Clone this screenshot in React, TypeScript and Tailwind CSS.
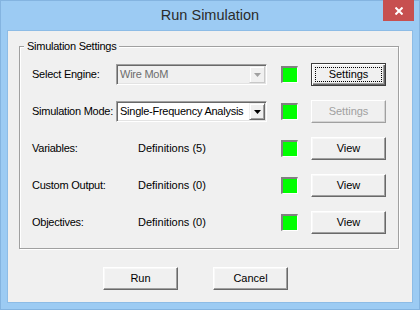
import React from "react";

type RowProps = {
  label: string;
  children: React.ReactNode;
  button: React.ReactNode;
};

function Arrow({ disabled }: { disabled?: boolean }) {
  return (
    <svg width="7" height="4" viewBox="0 0 7 4">
      <polygon points="0,0 7,0 3.5,4" fill={disabled ? "#a0a0a0" : "#000"} />
    </svg>
  );
}

function Combo({ value, disabled }: { value: string; disabled?: boolean }) {
  return (
    <div
      className={`w-[151px] h-[21px] flex items-stretch border border-t-[#a0a0a0] border-l-[#a0a0a0] border-b-white border-r-white shadow-[inset_1px_1px_0_#696969,inset_-1px_-1px_0_#e3e3e3] ${
        disabled ? "bg-[#f0f0f0]" : "bg-white"
      }`}
    >
      <span
        className={`flex-1 min-w-0 overflow-hidden whitespace-nowrap pl-[3px] flex items-center text-[11px] tracking-[-0.25px] ${
          disabled ? "text-[#6d6d6d]" : "text-black"
        }`}
      >
        {value}
      </span>
      <span
        className={`w-[16px] shrink-0 my-[1px] mr-[1px] flex items-center justify-center bg-[#f0f0f0] border ${
          disabled
            ? "border-t-[#f0f0f0] border-l-[#f0f0f0] border-b-[#c8c8c8] border-r-[#c8c8c8] shadow-[inset_1px_1px_0_#fff]"
            : "border-t-[#f0f0f0] border-l-[#f0f0f0] border-b-[#696969] border-r-[#696969] shadow-[inset_1px_1px_0_#fff,inset_-1px_-1px_0_#a0a0a0]"
        }`}
      >
        <Arrow disabled={disabled} />
      </span>
    </div>
  );
}

function Led() {
  return (
    <div className="ml-[14px] w-[17px] h-[17px] shrink-0 bg-[#00ff00] border-t-2 border-l-2 border-b border-r border-t-[#808080] border-l-[#808080] border-b-white border-r-white" />
  );
}

function Btn({
  label,
  disabled,
  isDefault,
}: {
  label: string;
  disabled?: boolean;
  isDefault?: boolean;
}) {
  if (isDefault) {
    return (
      <button className="w-[75px] h-[23px] bg-[#f0f0f0] border border-[#3c3c3c] shadow-[inset_1px_1px_0_#fff,inset_-1px_-1px_0_#696969,inset_-2px_-2px_0_#a0a0a0] p-[3px] flex">
        <span className="flex-1 flex items-center justify-center border border-dotted border-black text-[11px] text-black">
          {label}
        </span>
      </button>
    );
  }
  return (
    <button
      className={`w-[75px] h-[23px] bg-[#f0f0f0] border flex items-center justify-center text-[11px] ${
        disabled
          ? "border-t-white border-l-white border-b-[#a0a0a0] border-r-[#a0a0a0] shadow-[inset_-1px_-1px_0_#d4d4d4] text-[#a0a0a0]"
          : "border-t-white border-l-white border-b-[#696969] border-r-[#696969] shadow-[inset_-1px_-1px_0_#a0a0a0,inset_1px_1px_0_#f8f8f8] text-black"
      }`}
    >
      {label}
    </button>
  );
}

function Row({ label, children, button }: RowProps) {
  return (
    <div className="flex items-center h-[23px]">
      <span className="w-[84px] shrink-0 whitespace-nowrap text-[11px] tracking-[-0.25px] text-black">{label}</span>
      <div className="w-[151px] shrink-0 flex items-center">{children}</div>
      <Led />
      <div className="ml-[13px]">{button}</div>
    </div>
  );
}

export default function App() {
  return (
    <div className="w-[420px] h-[310px] bg-[#9ccbf3] border border-[#84b4e0] flex flex-col font-['Liberation_Sans',Arial,sans-serif] select-none">
      {/* title bar */}
      <div className="relative h-[29px] flex items-center justify-center">
        <span className="text-[14.5px] text-[#2b2b2b] pt-[1px]">Run Simulation</span>
        <div className="absolute right-[5px] top-[-1px] w-[31px] h-[21px] bg-[#c75050] flex items-center justify-center">
          <svg width="8" height="8" viewBox="0 0 8 8">
            <path d="M0.5 0.5 L7.5 7.5 M7.5 0.5 L0.5 7.5" stroke="#fff" strokeWidth="2" />
          </svg>
        </div>
      </div>

      {/* client area */}
      <div className="mx-[6px] mb-[6px] flex-1 bg-[#f0f0f0] border border-[#8dbce6]">
        <div className="relative ml-[11px] mt-[15px] w-[380px] h-[203px] border border-[#a0a0a0] shadow-[inset_1px_1px_0_#fff,1px_1px_0_#fff]">
          <span className="absolute left-[4px] top-[-8px] px-[3px] bg-[#f0f0f0] text-[11px] leading-[14px] tracking-[-0.25px] whitespace-nowrap text-black">
            Simulation Settings
          </span>
          <div className="pt-[16px] pl-[12px] flex flex-col gap-[14px]">
            <Row label="Select Engine:" button={<Btn label="Settings" isDefault />}>
              <Combo value="Wire MoM" disabled />
            </Row>
            <Row label="Simulation Mode:" button={<Btn label="Settings" disabled />}>
              <Combo value="Single-Frequency Analysis" />
            </Row>
            <Row label="Variables:" button={<Btn label="View" />}>
              <span className="pl-[22px] whitespace-nowrap text-[11px] text-black">Definitions (5)</span>
            </Row>
            <Row label="Custom Output:" button={<Btn label="View" />}>
              <span className="pl-[22px] whitespace-nowrap text-[11px] text-black">Definitions (0)</span>
            </Row>
            <Row label="Objectives:" button={<Btn label="View" />}>
              <span className="pl-[22px] whitespace-nowrap text-[11px] text-black">Definitions (0)</span>
            </Row>
          </div>
        </div>

        <div className="mt-[18px] pl-[95px] flex gap-[35px]">
          <Btn label="Run" />
          <Btn label="Cancel" />
        </div>
      </div>
    </div>
  );
}
